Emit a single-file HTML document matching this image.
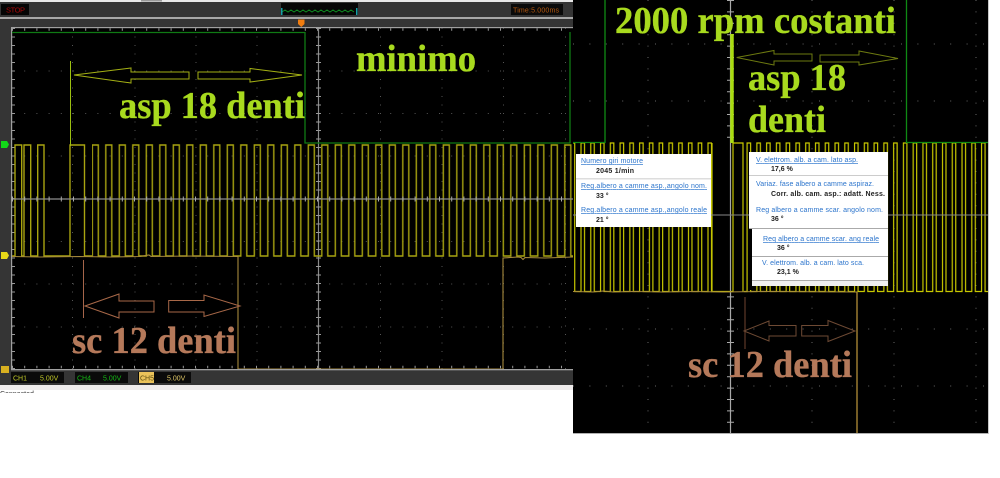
<!DOCTYPE html>
<html><head><meta charset="utf-8"><style>
html,body{margin:0;padding:0;background:#fff;width:1000px;height:478px;overflow:hidden}
svg{display:block}
.root{filter:blur(.3px)}
.b{font-family:"Liberation Serif",serif;font-weight:bold;stroke-width:.35px}
.s{font-family:"Liberation Sans",sans-serif;font-size:7px}
.l{fill:#2b74cc}
.v{fill:#222;font-weight:bold}
</style></head><body>
<svg class="root" width="1000" height="478" viewBox="0 0 1000 478" xmlns="http://www.w3.org/2000/svg">
<defs>
<pattern id="pl" patternUnits="userSpaceOnUse" x="90.3" y="0" width="13.5" height="300">
<path d="M0 256H2V145H8V256H13.5" fill="none" stroke="#a8a410" stroke-width="1.4"/>
</pattern>
<pattern id="pr" patternUnits="userSpaceOnUse" x="578.5" y="0" width="9.77" height="300">
<path d="M0 291.5H2.5V143H6V291.5H9.77" fill="none" stroke="#c8c800" stroke-width="1.2"/>
</pattern>
</defs>
<rect width="1000" height="478" fill="#fff"/>

<!-- left scope -->
<rect x="0" y="2" width="573" height="383" fill="#353535"/>
<rect x="0" y="0" width="573" height="2" fill="#e8e8e8"/>
<rect x="0" y="17" width="573" height="2" fill="#a8a8a8"/>
<rect x="141" y="0" width="21" height="1.5" fill="#999"/>
<rect x="1" y="4" width="28" height="11" fill="#050505"/>
<text x="6" y="12.5" class="s" fill="#a80808" style="font-size:7.500px" textLength="19">STOP</text>
<rect x="281" y="3" width="77" height="12" fill="#060606"/>
<path d="M282 12l3-2 3 2 3-2 3 2 3-2 3 2 3-2 3 2 3-2 3 2 3-2 3 2 3-2 3 2 3-2 3 2 3-2 3 2 3-2 3 2 3-2 3 2 3-2 3 2" fill="none" stroke="#0f8a20" stroke-width="1"/>
<rect x="281" y="8" width="1.5" height="7" fill="#16a0a8"/><rect x="356" y="8" width="1.5" height="7" fill="#16a0a8"/>
<rect x="511" y="4" width="52" height="11" fill="#0a0a0a"/>
<text x="513" y="12.5" class="s" fill="#b85a10" textLength="46">Time:5.000ms</text>
<rect x="12" y="28" width="561" height="341" fill="#000"/>
<rect x="11" y="27" width="562" height="1.2" fill="#a0a0a0"/>
<rect x="11" y="27" width="1.2" height="343" fill="#a0a0a0"/>
<path d="M298 19.5h6.5v4.5l-3.2 3-3.3-3z" fill="#f07d10"/>
<g stroke="#555" fill="none">
<line x1="12" x2="573" y1="71" y2="71" stroke-dasharray="1 11.2"/>
<line x1="12" x2="573" y1="113.5" y2="113.5" stroke-dasharray="1 11.2"/>
<line x1="12" x2="573" y1="156" y2="156" stroke-dasharray="1 11.2"/>
<line x1="12" x2="573" y1="241.5" y2="241.5" stroke-dasharray="1 11.2"/>
<line x1="12" x2="573" y1="284" y2="284" stroke-dasharray="1 11.2"/>
<line x1="12" x2="573" y1="327" y2="327" stroke-dasharray="1 11.2"/>
<g stroke-dasharray="1 7.5">
<line x1="72.5" x2="72.5" y1="28" y2="369"/><line x1="135" x2="135" y1="28" y2="369"/><line x1="196" x2="196" y1="28" y2="369"/><line x1="257" x2="257" y1="28" y2="369"/><line x1="380.5" x2="380.5" y1="28" y2="369"/><line x1="442" x2="442" y1="28" y2="369"/><line x1="503.5" x2="503.5" y1="28" y2="369"/><line x1="565.5" x2="565.5" y1="28" y2="369"/>
</g>
</g>
<g stroke="#999" fill="none">
<line x1="12" x2="573" y1="29.500" y2="29.500" stroke-width="2.500" stroke-dasharray="1 11.2"/>
<line x1="12" x2="573" y1="367" y2="367" stroke-width="2.500" stroke-dasharray="1 11.2"/>
<line x1="13.5" x2="13.5" y1="28" y2="369" stroke-width="3" stroke-dasharray="1 7.5"/>
</g>
<line x1="318.5" x2="318.5" y1="28" y2="369" stroke="#8a8a8a" stroke-width="1.2"/>
<line x1="318.5" x2="318.5" y1="28" y2="369" stroke="#999" stroke-width="5" stroke-dasharray="1 7.5"/>
<!-- left traces -->
<rect x="92" y="140" width="481" height="120" fill="url(#pl)"/>
<path d="M12 256H15V145H21.7V256H24V145H30.7V256H37.7V145H44V256H70V145H84.5V256H92.3" fill="none" stroke="#a8a410" stroke-width="1.4"/>
<line x1="12" x2="573" y1="199" y2="199" stroke="#8c8c8c" stroke-width="1.3"/>
<line x1="12" x2="573" y1="199" y2="199" stroke="#aaa" stroke-width="5" stroke-dasharray="1 11.2"/>
<path d="M12 32.5H305V143H570V32" fill="none" stroke="#0f7a14" stroke-width="1.3"/>
<path d="M12 256.5L40 257 80 256.500 110 257 140 256.500 149 255 151 256.500 190 256 238 256.500V369H503V258L518 257 521 257.500 523 259.500 525 257.500 545 258 573 257" fill="none" stroke="#a6893c" stroke-width="1.1"/>
<path d="M70.5 61V146" stroke="#9cc010" stroke-width="1" fill="none"/>
<path d="M83.5 260V318" stroke="#a5654a" stroke-width="1" fill="none"/>
<path d="M74 75L131 68V72H189V79H131V83Z M198 72H250V68.500L302 75 250 82V79H198Z" fill="#000" stroke="#a4b014" stroke-width="1"/>
<path d="M85 306L119 294V301H154V312H119V318Z M168.700 300.500H204V295L240 306 204 316.500V312H168.700Z" fill="none" stroke="#a86848" stroke-width="1"/>
<text x="119" y="118" class="b" font-size="38" fill="#a8da1e" stroke="#a8da1e" textLength="186" lengthAdjust="spacingAndGlyphs">asp 18 denti</text>
<text x="356" y="71" class="b" font-size="38" fill="#a8da1e" stroke="#a8da1e" textLength="120" lengthAdjust="spacingAndGlyphs">minimo</text>
<text x="72" y="353" class="b" font-size="38" fill="#b5795a" stroke="#b5795a" textLength="164" lengthAdjust="spacingAndGlyphs">sc 12 denti</text>
<!-- channel markers -->
<rect x="1" y="141" width="6" height="7" fill="#12d818"/><path d="M7 141l2 3.500-2 3.500z" fill="#12d818"/>
<rect x="1" y="252" width="6" height="7" fill="#e8d818"/><path d="M7 252l2 3.500-2 3.500z" fill="#e8d818"/>
<rect x="1" y="366" width="8" height="7" fill="#d8b020"/>
<rect x="11" y="369" width="562" height="1.3" fill="#a0a0a0"/>
<!-- bottom bar boxes -->
<rect x="11" y="372" width="53" height="11" fill="#0a0a0a"/>
<text x="13" y="380.500" class="s" fill="#c0c828">CH1</text><text x="40" y="380.500" class="s" fill="#c0c828">5.00V</text>
<rect x="75" y="372" width="53" height="11" fill="#0a0a0a"/>
<text x="77" y="380.500" class="s" fill="#14b814">CH4</text><text x="103" y="380.500" class="s" fill="#14b814">5.00V</text>
<rect x="138" y="372" width="53" height="11" fill="#0a0a0a"/>
<rect x="139" y="372" width="15" height="11" fill="#eac25a"/>
<text x="140" y="380.500" class="s" fill="#5a4a10">CH5</text><text x="167" y="380.500" class="s" fill="#e0c868">5.00V</text>
<rect x="0" y="385" width="573" height="5" fill="#efecec"/>
<svg x="0" y="389" width="60" height="4"><text x="0" y="7" class="s" fill="#333">Connected</text></svg>

<!-- right scope -->
<rect x="573" y="0" width="415" height="433" fill="#000"/>
<rect x="573" y="433" width="415" height="1" fill="#b0b0b0"/>
<rect x="988" y="0" width="1" height="434" fill="#c8c8c8"/>
<g stroke="#666" fill="none">
<g stroke-dasharray="1 15.400">
<line x1="573" x2="988" y1="44" y2="44"/><line x1="573" x2="988" y1="101" y2="101"/><line x1="573" x2="988" y1="329" y2="329"/><line x1="573" x2="988" y1="386" y2="386"/>
</g>
<g stroke-dasharray="1 10.400">
<line x1="648" x2="648" y1="0" y2="433"/><line x1="812" x2="812" y1="0" y2="433"/><line x1="894" x2="894" y1="0" y2="433"/><line x1="976" x2="976" y1="0" y2="433"/>
</g>
</g>
<line x1="730.500" x2="730.500" y1="0" y2="433" stroke="#a8a8a8" stroke-width="1.200"/>
<line x1="730.500" x2="730.500" y1="0" y2="433" stroke="#aaa" stroke-width="7" stroke-dasharray="1 10.400"/>
<rect x="573" y="140" width="415" height="155" fill="url(#pr)"/>
<rect x="712" y="141" width="32" height="152" fill="#000"/>
<line x1="730.500" x2="730.500" y1="141" y2="293" stroke="#a8a8a8" stroke-width="1.200"/>
<path d="M712 143V291.500H733V143H743V291.500" fill="none" stroke="#c8c800" stroke-width="1.200"/>
<line x1="573" x2="988" y1="215" y2="215" stroke="#888" stroke-width="1"/>
<path d="M573 291.500L593 292 603 291 613 292 633 291.500 663 292 693 291.500 723 292 763 291.500 857 292" fill="none" stroke="#a6893c" stroke-width="1"/>
<path d="M857 291.500V433" fill="none" stroke="#c09a3c" stroke-width="1.200"/>
<path d="M573 142.500H605V0M906.500 0V142.500H988" fill="none" stroke="#0f8a14" stroke-width="1.300"/>
<path d="M732 34V143" stroke="#a9dc10" stroke-width="3.500" fill="none"/>
<path d="M745 297V349" stroke="#5e3a28" stroke-width="1.200" fill="none"/>
<path d="M736.700 57.500L774 50.500V54H812V61H774V65Z M820 55H859V51L898 58.500 859 65V62H820Z" fill="none" stroke="#6d7a10" stroke-width="1"/>
<path d="M744 331L769 321V325.500H796V336H769V341Z M801.700 325.500H828V320.500L855 331 828 341.500V336H801.700Z" fill="none" stroke="#6e4a34" stroke-width="1"/>
<text x="615" y="33" class="b" font-size="38" fill="#a8da1e" stroke="#a8da1e" textLength="281" lengthAdjust="spacingAndGlyphs">2000 rpm costanti</text>
<text x="748" y="90" class="b" font-size="38" fill="#a8da1e" stroke="#a8da1e" textLength="98" lengthAdjust="spacingAndGlyphs">asp 18</text>
<text x="748" y="132" class="b" font-size="38" fill="#a8da1e" stroke="#a8da1e" textLength="78" lengthAdjust="spacingAndGlyphs">denti</text>
<text x="688" y="377" class="b" font-size="38" fill="#b5795a" stroke="#b5795a" textLength="164" lengthAdjust="spacingAndGlyphs">sc 12 denti</text>

<!-- popup left -->
<rect x="576" y="154" width="135" height="73" fill="#fff"/>
<rect x="576" y="178" width="135" height="1.500" fill="#ddd"/>
<text x="581" y="163" class="s l" text-decoration="underline" textLength="62">Numero giri motore</text>
<text x="596" y="173" class="s v" textLength="38">2045 1/min</text>
<text x="581" y="188" class="s l" text-decoration="underline" textLength="126">Reg.albero a camme asp.,angolo nom.</text>
<text x="596" y="198" class="s v">33 °</text>
<text x="581" y="212" class="s l" text-decoration="underline" textLength="126">Reg.albero a camme asp.,angolo reale</text>
<text x="596" y="222" class="s v">21 °</text>

<!-- popup right -->
<rect x="749" y="229" width="4" height="61" fill="#000"/>
<rect x="749" y="152" width="139" height="77" fill="#fff"/>
<rect x="752" y="229" width="136" height="57" fill="#fff"/>
<rect x="749" y="175" width="139" height="1" fill="#ccc"/>
<rect x="749" y="228" width="139" height="1" fill="#aaa"/>
<rect x="752" y="256" width="136" height="1" fill="#aaa"/>
<rect x="752" y="280" width="136" height="1" fill="#aaa"/>
<rect x="752" y="281" width="136" height="5" fill="#f0f0f0"/>
<text x="756" y="162" class="s l" text-decoration="underline" textLength="102">V. elettrom. alb. a cam. lato asp.</text>
<text x="771" y="171" class="s v">17,6 %</text>
<text x="756" y="186" class="s l" textLength="118">Variaz. fase albero a camme aspiraz.</text>
<text x="771" y="196" class="s v" textLength="114">Corr. alb. cam. asp.: adatt. Ness.</text>
<text x="756" y="212" class="s l" textLength="127">Reg albero a camme scar. angolo nom.</text>
<text x="771" y="221" class="s v">36 °</text>
<text x="763" y="241" class="s l" text-decoration="underline" textLength="116">Req albero a camme scar. ang reale</text>
<text x="777" y="250" class="s v">36 °</text>
<text x="762" y="265" class="s l" textLength="102">V. elettrom. alb. a cam. lato sca.</text>
<text x="777" y="274" class="s v">23,1 %</text>
</svg>
</body></html>
